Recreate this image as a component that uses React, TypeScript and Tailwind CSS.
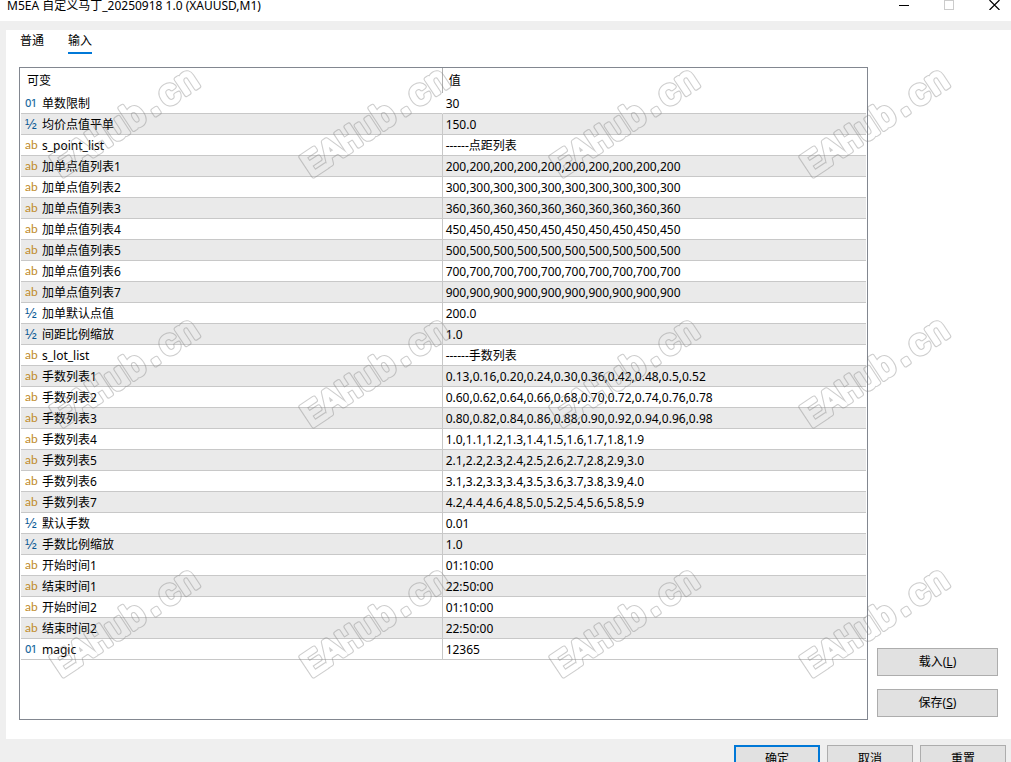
import React, { useState } from 'react';

type ParamType = 'int' | 'double' | 'string';

interface Param {
  type: ParamType;
  name: string;
  value: string;
}

const params: Param[] = [
  { type: 'int', name: '单数限制', value: '30' },
  { type: 'double', name: '均价点值平单', value: '150.0' },
  { type: 'string', name: 's_point_list', value: '------点距列表' },
  { type: 'string', name: '加单点值列表1', value: '200,200,200,200,200,200,200,200,200,200' },
  { type: 'string', name: '加单点值列表2', value: '300,300,300,300,300,300,300,300,300,300' },
  { type: 'string', name: '加单点值列表3', value: '360,360,360,360,360,360,360,360,360,360' },
  { type: 'string', name: '加单点值列表4', value: '450,450,450,450,450,450,450,450,450,450' },
  { type: 'string', name: '加单点值列表5', value: '500,500,500,500,500,500,500,500,500,500' },
  { type: 'string', name: '加单点值列表6', value: '700,700,700,700,700,700,700,700,700,700' },
  { type: 'string', name: '加单点值列表7', value: '900,900,900,900,900,900,900,900,900,900' },
  { type: 'double', name: '加单默认点值', value: '200.0' },
  { type: 'double', name: '间距比例缩放', value: '1.0' },
  { type: 'string', name: 's_lot_list', value: '------手数列表' },
  { type: 'string', name: '手数列表1', value: '0.13,0.16,0.20,0.24,0.30,0.36,0.42,0.48,0.5,0.52' },
  { type: 'string', name: '手数列表2', value: '0.60,0.62,0.64,0.66,0.68,0.70,0.72,0.74,0.76,0.78' },
  { type: 'string', name: '手数列表3', value: '0.80,0.82,0.84,0.86,0.88,0.90,0.92,0.94,0.96,0.98' },
  { type: 'string', name: '手数列表4', value: '1.0,1.1,1.2,1.3,1.4,1.5,1.6,1.7,1.8,1.9' },
  { type: 'string', name: '手数列表5', value: '2.1,2.2,2.3,2.4,2.5,2.6,2.7,2.8,2.9,3.0' },
  { type: 'string', name: '手数列表6', value: '3.1,3.2,3.3,3.4,3.5,3.6,3.7,3.8,3.9,4.0' },
  { type: 'string', name: '手数列表7', value: '4.2,4.4,4.6,4.8,5.0,5.2,5.4,5.6,5.8,5.9' },
  { type: 'double', name: '默认手数', value: '0.01' },
  { type: 'double', name: '手数比例缩放', value: '1.0' },
  { type: 'string', name: '开始时间1', value: '01:10:00' },
  { type: 'string', name: '结束时间1', value: '22:50:00' },
  { type: 'string', name: '开始时间2', value: '01:10:00' },
  { type: 'string', name: '结束时间2', value: '22:50:00' },
  { type: 'int', name: 'magic', value: '12365' },
];

const typeIcons: Record<ParamType, { label: string; className: string }> = {
  int: { label: '01', className: 'font-[Inter,sans-serif] text-[10px] font-medium text-[#1c6aa0]' },
  double: { label: '½', className: "font-['Liberation_Sans',sans-serif] text-[14px] text-[#0a5a96]" },
  string: { label: 'ab', className: 'font-[Lato,sans-serif] text-[12px] text-[#c08a2a]' },
};

const watermarkColumns = [64, 314, 564, 814];
const watermarkRows = [178, 428, 678];

// Hollow rounded lettering: a wide stroke with a narrower one cut out of it
const Watermark: React.FC = () => (
  <svg
    className="pointer-events-none absolute inset-0 h-full w-full"
    fontFamily="'Liberation Mono', 'Courier New', monospace"
    fontSize="35"
    strokeLinejoin="round"
    aria-hidden="true"
  >
    <mask id="hollow" maskUnits="userSpaceOnUse" x="-10" y="-50" width="200" height="70">
      <text x="-2" y="-2" stroke="white" strokeWidth="5" fill="white">EAHub.cn</text>
      <text x="-2" y="-2" stroke="black" strokeWidth="3" fill="black">EAHub.cn</text>
    </mask>
    {watermarkRows.map((y) =>
      watermarkColumns.map((x) => (
        <g key={`${x}-${y}`} transform={`translate(${x} ${y}) rotate(-33.5)`}>
          <rect x="-10" y="-50" width="200" height="70" fill="#808080" fillOpacity="0.4" mask="url(#hollow)" />
        </g>
      )),
    )}
  </svg>
);

const TitleBar: React.FC = () => (
  <header className="flex h-[21px] shrink-0 items-start justify-between bg-white pl-[7px] pr-[11px]">
    <h1 className="whitespace-nowrap text-xs leading-3">M5EA 自定义马丁_20250918 1.0 (XAUUSD,M1)</h1>
    <div className="flex gap-[35px]">
      <button type="button" aria-label="最小化">
        <svg width="10" height="10" shapeRendering="crispEdges">
          <path d="M0 5.5H10" stroke="#000" />
        </svg>
      </button>
      <button type="button" aria-label="最大化" disabled>
        <svg width="10" height="10" shapeRendering="crispEdges">
          <path d="M.5 .5H9.5V9.5H.5Z" stroke="#ccc" fill="none" />
        </svg>
      </button>
      <button type="button" aria-label="关闭">
        <svg width="11" height="10">
          <path d="M.5 0L10.5 10M10.5 0L.5 10" stroke="#000" strokeWidth="1.2" />
        </svg>
      </button>
    </div>
  </header>
);

const ParamTable: React.FC = () => (
  <div className="min-w-0 flex-1 border border-[#828790] p-px pt-0">
    <table className="w-full table-fixed border-separate border-spacing-0 text-left">
      <thead>
        <tr className="h-[25px]">
          <th className="w-[49.9%] border-r border-[#b0b0b0] py-0 pl-[6px] font-normal">可变</th>
          <th className="py-0 pl-[6px] font-normal">值</th>
        </tr>
      </thead>
      <tbody>
        {params.map((param, index) => {
          const icon = typeIcons[param.type];
          return (
            <tr key={param.name} className="h-[21px] even:bg-[#eaeaea]">
              <td
                className={`border-b border-[#c8c8c8] p-0 pl-1 ${index === 0 ? 'border-r border-r-transparent' : 'border-r'}`}
              >
                <div className="flex h-5 items-center">
                  <span className={`w-[17px] shrink-0 leading-4 ${icon.className}`}>{icon.label}</span>
                  <span className="pt-0.5">{param.name}</span>
                </div>
              </td>
              <td className="whitespace-nowrap border-b border-[#c8c8c8] p-0 pl-[3px] pt-0.5">{param.value}</td>
            </tr>
          );
        })}
      </tbody>
    </table>
  </div>
);

const App: React.FC = () => {
  const [activeTab, setActiveTab] = useState<'common' | 'inputs'>('inputs');

  const tabClass = (tab: 'common' | 'inputs') =>
    `border-b-2 py-[3px] leading-4 ${activeTab === tab ? 'border-[#0078d7]' : 'border-transparent'}`;

  const sideButton = 'h-7 w-[121px] border border-[#adadad] bg-[#e1e1e1]';
  const footerButton = 'h-7 w-[86px] bg-[#e1e1e1]';

  return (
    <div className="relative flex h-screen flex-col overflow-hidden bg-[#efefef] font-['Noto_Sans','Noto_Sans_CJK_SC',sans-serif] text-xs leading-4 text-black">
      <TitleBar />

      <main className="ml-[6px] mt-[9px] flex min-h-0 flex-1 flex-col bg-white px-[13px] pb-[19px]">
        {/* Tabs */}
        <div role="tablist" className="mb-[13px] flex gap-6 pl-px">
          <button
            type="button"
            role="tab"
            aria-selected={activeTab === 'common'}
            className={tabClass('common')}
            onClick={() => setActiveTab('common')}
          >
            普通
          </button>
          <button
            type="button"
            role="tab"
            aria-selected={activeTab === 'inputs'}
            className={tabClass('inputs')}
            onClick={() => setActiveTab('inputs')}
          >
            输入
          </button>
        </div>

        <div className="flex min-h-0 flex-1 gap-[9px]">
          <ParamTable />
          <div className="flex flex-col justify-end gap-[13px] pb-[3px]">
            <button type="button" className={sideButton}>
              载入(<u>L</u>)
            </button>
            <button type="button" className={sideButton}>
              保存(<u>S</u>)
            </button>
          </div>
        </div>
      </main>

      <footer className="flex h-[23px] shrink-0 justify-end gap-[7px] pr-[5px] pt-[6px]">
        <button type="button" className={`${footerButton} border-2 border-[#0078d7]`}>确定</button>
        <button type="button" className={`${footerButton} border border-[#adadad]`}>取消</button>
        <button type="button" className={`${footerButton} border border-[#adadad]`}>重置</button>
      </footer>

      <Watermark />
    </div>
  );
};

export default App;
